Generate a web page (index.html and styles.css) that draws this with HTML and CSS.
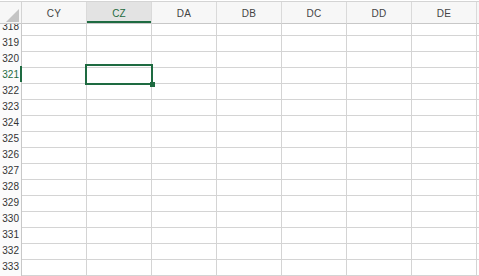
FILE: index.html
```html
<!DOCTYPE html>
<html>
<head>
<meta charset="utf-8">
<link rel="stylesheet" href="styles.css">
</head>
<body>
<div class="sheet">
  <div class="head">
    <div class="corner"><div class="tri"></div></div>
    <div class="colh">CY</div>
    <div class="colh sel">CZ</div>
    <div class="colh">DA</div>
    <div class="colh">DB</div>
    <div class="colh">DC</div>
    <div class="colh">DD</div>
    <div class="colh">DE</div>
    <div class="colh last"></div>
  </div>
  <div class="viewport">
    <div class="rows" id="rows"></div>
  </div>
</div>
<script>
  var rows = document.getElementById('rows');
  for (var r = 318; r <= 333; r++) {
    var row = document.createElement('div');
    row.className = 'row';
    var h = document.createElement('div');
    h.className = 'rowh' + (r === 321 ? ' sel' : '');
    h.textContent = r;
    row.appendChild(h);
    for (var c = 0; c < 8; c++) {
      var cell = document.createElement('div');
      cell.className = 'cell' + (c === 7 ? ' last' : '');
      if (r === 321 && c === 1) {
        var o = document.createElement('div');
        o.className = 'active';
        var hd = document.createElement('div');
        hd.className = 'handle';
        o.appendChild(hd);
        cell.appendChild(o);
      }
      row.appendChild(cell);
    }
    rows.appendChild(row);
  }
  var tail = document.createElement('div');
  tail.className = 'row';
  var th = document.createElement('div');
  th.className = 'rowh';
  tail.appendChild(th);
  for (var k = 0; k < 8; k++) {
    var tc = document.createElement('div');
    tc.className = 'cell' + (k === 7 ? ' last' : '');
    tail.appendChild(tc);
  }
  rows.appendChild(tail);
</script>
</body>
</html>
```
FILE: styles.css
```css
html, body {
  margin: 0;
  padding: 0;
  background: #ffffff;
}
body {
  font-family: "Liberation Sans", Arial, sans-serif;
  font-size: 10px;
  overflow: hidden;
}
.sheet {
  width: 479px;
  height: 276px;
  padding-top: 1px;
  box-sizing: border-box;
  overflow: hidden;
}
.head {
  display: grid;
  grid-template-columns: 22px repeat(7, 65px) 1fr;
  border-top: 1px solid #d4d4d4;
  height: 22px;
  background: #f7f7f7;
}
.corner {
  border-right: 1px solid #d4d4d4;
  border-bottom: 1px solid #c8c8c8;
  display: flex;
  align-items: flex-end;
  justify-content: flex-end;
  padding: 0 2px 1px 0;
}
.tri {
  width: 0;
  height: 0;
  flex: none;
  border-left: 13px solid transparent;
  border-bottom: 13px solid #c4c4c4;
}
.colh {
  border-right: 1px solid #dadada;
  border-bottom: 1px solid #c8c8c8;
  display: flex;
  align-items: center;
  justify-content: center;
  color: #444444;
  padding-top: 2px;
  box-sizing: border-box;
  letter-spacing: 0.2px;
}
.colh.sel {
  background: #e3e3e3;
  color: #1e6b41;
  box-shadow: inset 0 -2px 0 #1e6b41;
}
.colh.last {
  border-right: none;
}
.viewport {
  height: 252px;
  overflow: hidden;
}
.rows {
  margin-top: -6px;
}
.row {
  display: grid;
  grid-template-columns: 22px repeat(7, 65px) 1fr;
  height: 16px;
}
.rowh {
  border-right: 1px solid #c8c8c8;
  border-bottom: 1px solid #d4d4d4;
  color: #333333;
  text-align: right;
  padding-right: 2px;
  line-height: 17px;
  background: #fbfbfb;
  box-sizing: border-box;
}
.rowh.sel {
  color: #1e6b41;
  box-shadow: inset -1px 0 0 #1e6b41;
  border-right-color: #1e6b41;
}
.cell {
  position: relative;
  border-right: 1px solid #d4d4d4;
  border-bottom: 1px solid #d4d4d4;
}
.cell.last {
  border-right: none;
}
.active {
  position: absolute;
  inset: -2px;
  border: 2px solid #1e6b41;
  z-index: 2;
}
.handle {
  position: absolute;
  width: 5px;
  height: 5px;
  right: -4px;
  bottom: -4px;
  background: #1e6b41;
}
```
